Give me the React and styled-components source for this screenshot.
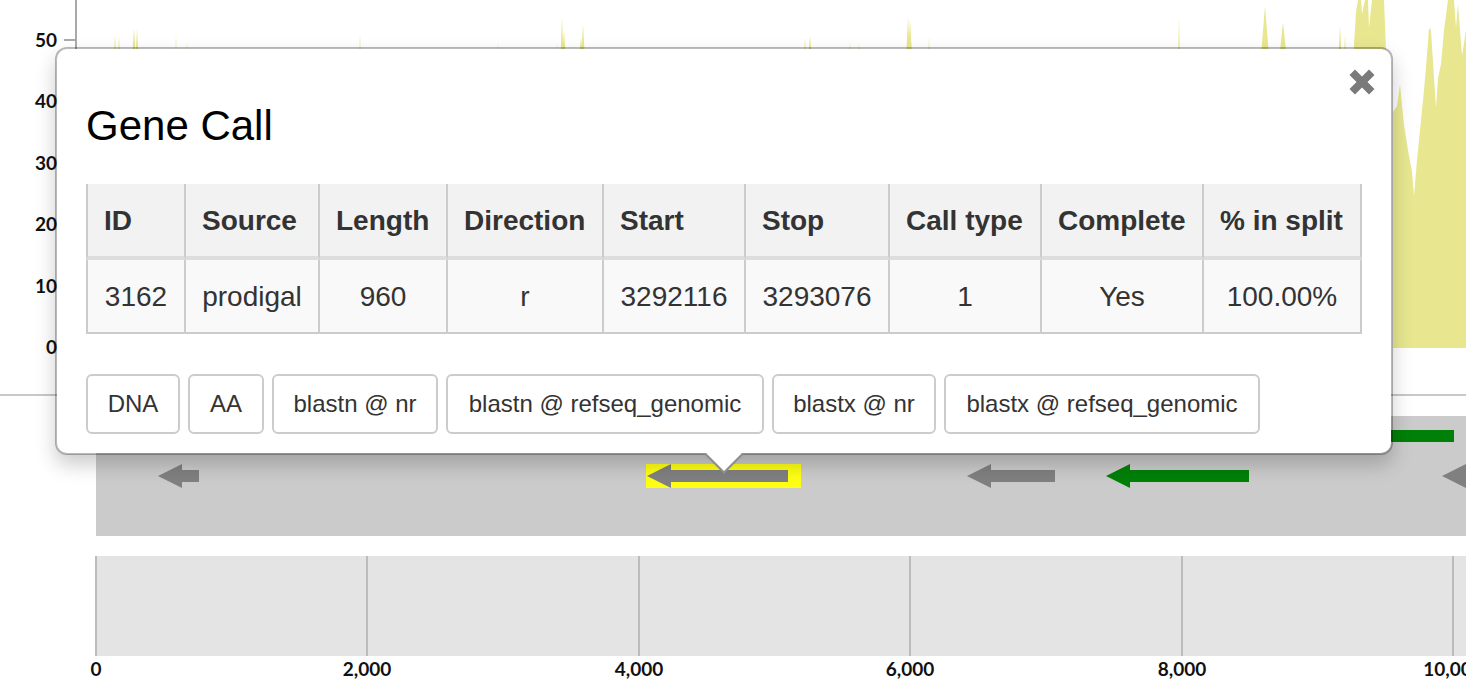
import styled, { createGlobalStyle } from "styled-components";

const GlobalStyle = createGlobalStyle`
  html, body {
    margin: 0;
    padding: 0;
    height: 100%;
    background: #ffffff;
    overflow: hidden;
  }
  body {
    font-family: "Liberation Sans", Arial, sans-serif;
  }
`;

const Page = styled.div`
  position: relative;
  width: 1466px;
  height: 682px;
  overflow: hidden;
`;

const CoverageChart = styled.svg`
  display: block;
  width: 1466px;
  height: 394px;
`;

const Divider = styled.div`
  height: 2px;
  background: #c8c8c8;
`;

const GeneTrack = styled.svg`
  display: block;
  width: 1370px;
  height: 120px;
  margin: 20px 0 0 96px;
  background: #cbcbcb;
`;

const Ruler = styled.svg`
  display: block;
  width: 1466px;
  height: 126px;
  margin-top: 20px;
`;

const AxisLabel = styled.text`
  font-family: Lato, "Open Sans", sans-serif;
  font-size: 19px;
  font-weight: 700;
  fill: #111111;
`;

const Popover = styled.div`
  position: absolute;
  left: 55px;
  top: 47px;
  box-sizing: border-box;
  width: 1338px;
  padding: 53px 29px 19px;
  background: #ffffff;
  background-clip: padding-box;
  border: 2px solid rgba(0, 0, 0, 0.27);
  border-radius: 12px;
  box-shadow: 0 10px 20px rgba(0, 0, 0, 0.2);
`;

const Pointer = styled.div`
  position: absolute;
  left: 646px;
  bottom: -21px;
  width: 0;
  height: 0;
  border-left: 21px solid transparent;
  border-right: 21px solid transparent;
  border-top: 21px solid #8d8d8d;

  &::after {
    content: "";
    position: absolute;
    left: -20px;
    top: -23px;
    width: 0;
    height: 0;
    border-left: 20px solid transparent;
    border-right: 20px solid transparent;
    border-top: 20px solid #ffffff;
  }
`;

const CloseIcon = styled.svg`
  position: absolute;
  top: 20px;
  right: 16px;
  width: 26px;
  height: 26px;
  fill: #7a7a7a;
`;

const Title = styled.h3`
  margin: 0 0 34px;
  font-size: 42px;
  font-weight: 400;
  line-height: 48px;
  color: #000000;
`;

const Table = styled.table`
  width: 1276px;
  table-layout: fixed;
  border-collapse: separate;
  border-spacing: 0;
  color: #333333;
  font-size: 28px;
`;

const HeadCell = styled.th`
  box-sizing: border-box;
  height: 76px;
  padding: 2px 0 0 16px;
  text-align: left;
  font-weight: 700;
  white-space: nowrap;
  background: #f2f2f2;
  border-right: 2px solid #cccccc;
  border-bottom: 4px solid #dddddd;

  &:first-child {
    border-left: 2px solid #cccccc;
  }
`;

const BodyCell = styled.td`
  box-sizing: border-box;
  height: 74px;
  padding: 2px 0 0;
  text-align: center;
  background: #f9f9f9;
  border-right: 2px solid #cccccc;
  border-bottom: 2px solid #cccccc;

  &:first-child {
    border-left: 2px solid #cccccc;
  }
`;

const ButtonRow = styled.div`
  display: flex;
  gap: 8px;
  margin-top: 40px;
`;

const LinkButton = styled.button`
  box-sizing: border-box;
  width: ${(props) => props.$width}px;
  height: 60px;
  padding: 0;
  font-family: inherit;
  font-size: 24px;
  color: #333333;
  background: #ffffff;
  border: 2px solid #cccccc;
  border-radius: 6px;
  white-space: nowrap;
`;

const columns = [
  { head: "ID", width: 100, value: "3162" },
  { head: "Source", width: 134, value: "prodigal" },
  { head: "Length", width: 128, value: "960" },
  { head: "Direction", width: 156, value: "r" },
  { head: "Start", width: 142, value: "3292116" },
  { head: "Stop", width: 144, value: "3293076" },
  { head: "Call type", width: 152, value: "1" },
  { head: "Complete", width: 162, value: "Yes" },
  { head: "% in split", width: 158, value: "100.00%" },
];

const links = [
  { label: "DNA", width: 94 },
  { label: "AA", width: 76 },
  { label: "blastn @ nr", width: 166 },
  { label: "blastn @ refseq_genomic", width: 318 },
  { label: "blastx @ nr", width: 164 },
  { label: "blastx @ refseq_genomic", width: 316 },
];

const yTicks = [
  { label: "50", y: 40 },
  { label: "40", y: 101 },
  { label: "30", y: 163 },
  { label: "20", y: 224 },
  { label: "10", y: 286 },
  { label: "0", y: 347 },
];

const xTicks = [
  { label: "0", x: 96 },
  { label: "2,000", x: 367 },
  { label: "4,000", x: 639 },
  { label: "6,000", x: 910 },
  { label: "8,000", x: 1182 },
  { label: "10,000", x: 1453 },
];

// [x, peak y, half width] for the narrow spikes above the popover
const spikes = [
  [115, 34, 1.5], [119, 36, 1.5], [134, 28, 2.5], [137, 28, 2], [176, 34, 0.8], [187, 40, 0.8],
  [360, 33, 1], [489, 45, 1], [498, 42, 0.8], [557, 42, 1], [562, 16, 2], [564, 30, 2.5],
  [581, 37, 2.5], [583, 24, 2.5], [805, 38, 1.5], [810, 36, 2.5], [850, 40, 1], [859, 44, 2],
  [908, 16, 2.5], [910, 20, 3], [929, 36, 1], [1179, 16, 1.2], [1265, 6, 5.5], [1283, 22, 5],
  [1340, 25, 2], [1345, 34, 1.2],
];

const spikePath = spikes
  .map(([x, y, w]) => `M${x - w} 348L${x - w * 0.8} 60L${x} ${y}L${x + w * 0.8} 60L${x + w} 348Z`)
  .join("");

const bigPeak =
  "M1352 348L1354 45L1356 12L1358 0L1361 0L1362 14L1365 0L1368 0L1369 28L1372 0L1384 0L1386 50L1388 348Z" +
  "M1393 348L1393 112L1397 106L1400 84L1404 125L1408 150L1412 172L1414 196L1417 160L1421 120L1424 90" +
  "L1427 55L1429 28L1431 30L1433 62L1436 108L1438 78L1441 64L1444 30L1448 0L1454 0L1456 28L1458 4L1460 30" +
  "L1462 56L1466 30L1466 348Z";

const Arrow = ({ tip, end, y = 56, color = "#808080" }) => {
  const neck = tip + 24;
  return (
    <path
      d={`M${tip} ${y}L${neck} ${y - 12}V${y - 6}H${end}V${y + 6}H${neck}V${y + 12}Z`}
      fill={color}
    />
  );
};

const App = () => {
  return (
    <Page>
      <GlobalStyle />
      <CoverageChart viewBox="0 0 1466 394">
        <path d={spikePath + bigPeak} fill="#e8e790" />
        <rect x="75" y="0" width="2" height="348" fill="#aaaaaa" />
        {yTicks.map((tick) => (
          <g key={tick.label}>
            <rect x="64" y={tick.y - 1} width="12" height="2" fill="#aaaaaa" />
            <AxisLabel x="57" y={tick.y + 7} textAnchor="end">
              {tick.label}
            </AxisLabel>
          </g>
        ))}
      </CoverageChart>
      <Divider />
      <GeneTrack viewBox="0 0 1370 120">
        <Arrow tip={62} end={103} y={60} />
        <rect x="550" y="48" width="155" height="24" fill="#ffff14" />
        <Arrow tip={551} end={692} y={60} />
        <Arrow tip={871} end={959} y={60} />
        <Arrow tip={1010} end={1153} y={60} color="#008008" />
        <Arrow tip={1150} end={1358} y={20} color="#008008" />
        <Arrow tip={1346} end={1400} y={60} />
      </GeneTrack>
      <Ruler viewBox="0 0 1466 126">
        <rect x="96" y="0" width="1370" height="100" fill="#e4e4e4" />
        {xTicks.map((tick) => (
          <g key={tick.label}>
            <rect x={tick.x - 1} y="0" width="2" height="100" fill="#bcbcbc" />
            <AxisLabel x={tick.x} y="120" textAnchor="middle">
              {tick.label}
            </AxisLabel>
          </g>
        ))}
      </Ruler>
      <Popover>
        <CloseIcon viewBox="0 0 26 26">
          <path d="M6 0.5L13 7.5L20 0.5L25.5 6L18.5 13L25.5 20L20 25.5L13 18.5L6 25.5L0.5 20L7.5 13L0.5 6Z" />
        </CloseIcon>
        <Title>Gene Call</Title>
        <Table>
          <colgroup>
            {columns.map((col) => (
              <col key={col.head} style={{ width: col.width }} />
            ))}
          </colgroup>
          <thead>
            <tr>
              {columns.map((col) => (
                <HeadCell key={col.head}>{col.head}</HeadCell>
              ))}
            </tr>
          </thead>
          <tbody>
            <tr>
              {columns.map((col) => (
                <BodyCell key={col.head}>{col.value}</BodyCell>
              ))}
            </tr>
          </tbody>
        </Table>
        <ButtonRow>
          {links.map((link) => (
            <LinkButton key={link.label} $width={link.width}>
              {link.label}
            </LinkButton>
          ))}
        </ButtonRow>
        <Pointer />
      </Popover>
    </Page>
  );
};

export default App;
